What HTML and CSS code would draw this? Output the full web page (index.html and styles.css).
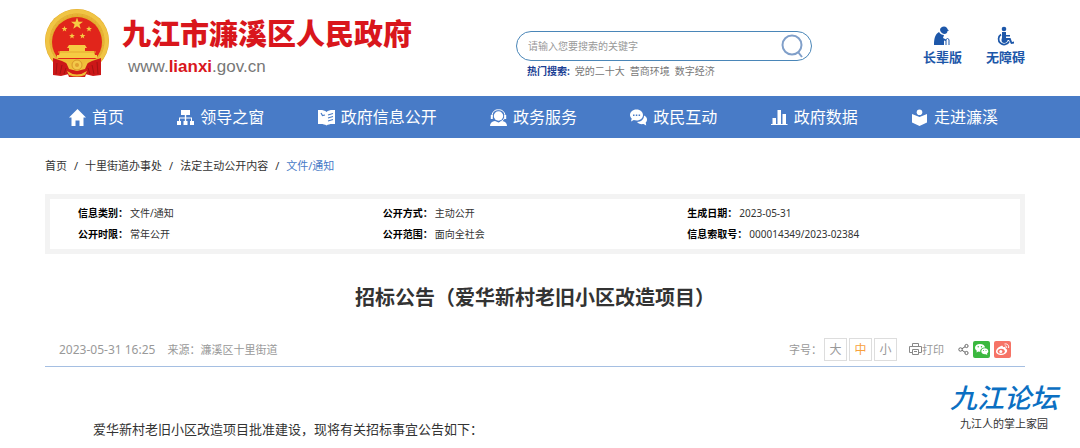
FILE: index.html
```html
<!DOCTYPE html>
<html lang="zh-CN">

<head>
  <meta charset="UTF-8">
  <meta name="viewport" content="width=device-width, initial-scale=1.0">
  <title>招标公告（爱华新村老旧小区改造项目）</title>
  <link rel="stylesheet" href="styles.css">
</head>

<body>
  <header class="header">
    <a class="logo" href="#">
      <svg class="logo__emblem" viewBox="0 0 64 69" aria-hidden="true">
        <circle cx="32" cy="32" r="32" fill="#e3ad2c"/>
        <circle cx="32" cy="32" r="29.500" fill="none" stroke="#f0c444" stroke-width="4"/>
        <circle cx="32" cy="32" r="26.500" fill="none" stroke="#e6b238" stroke-width="2" stroke-dasharray="4 1"/>
        <circle cx="32" cy="33" r="25" fill="#e1251b"/>
        <g fill="#f6cb43">
          <path d="M32 8.500l1.500 4.200 4.500.1-3.600 2.700 1.300 4.300-3.700-2.600-3.700 2.600 1.300-4.300-3.600-2.700 4.500-.1z"/>
          <path d="M19.500 17l.8 2 2.100.1-1.700 1.300.6 2.100-1.800-1.200-1.800 1.200.6-2.100-1.700-1.300 2.100-.1z"/>
          <path d="M44 17l.8 2 2.100.1-1.700 1.300.6 2.100-1.800-1.200-1.800 1.200.6-2.100-1.700-1.300 2.100-.1z"/>
          <path d="M27 24l.8 2 2.100.1-1.700 1.300.6 2.100-1.800-1.200-1.800 1.200.6-2.100-1.700-1.300 2.100-.1z"/>
          <path d="M37.500 24l.8 2 2.100.1-1.700 1.300.6 2.100-1.800-1.200-1.800 1.200.6-2.100-1.700-1.300 2.100-.1z"/>
          <path d="M24 36h16l2 3h-2v3h9l1 4h2v3H12v-3h2l1-4h9v-3h-2z"/>
        </g>
        <path d="M13 43h38" stroke="#e5a92e"/>
        <path d="M9 50h46c-2 7-9 12-23 12S12 57 9 50z" fill="#eebc37"/>
        <path d="M8 49l9 3 10 5-3 8-8 2-8-1z" fill="#cc1718"/>
        <path d="M56 49l-9 3-10 5 3 8 8 2 8-1z" fill="#cc1718"/>
        <path d="M12 54l-1 11m6-9l-2 9m6-6l-2 6m33-12l1 12m-6-9l2 9m-6-6l2 6" stroke="#a31312"/>
        <path d="M21 60h22l-3 8H24z" fill="#d31b18"/>
        <path d="M22 62q10 7 20 0l-2 4q-8 3-16 0z" fill="#efbd38"/>
        <path d="M20 51l6 4h12l6-4-4 9-8 2-8-2z" fill="#f0c03c"/>
        <circle cx="32" cy="56" r="5" fill="#f3c94a" stroke="#d8962a"/>
        <circle cx="32" cy="56" r="2" fill="#e0a030"/>
      </svg>
      <span class="logo__text">
        <strong class="logo__name">九江市濂溪区人民政府</strong>
        <span class="logo__url">www.<b>lianxi</b>.gov.cn</span>
      </span>
    </a>

    <form class="search">
      <div class="search__box">
        <input class="search__input" type="text" placeholder="请输入您要搜索的关键字" aria-label="搜索关键字">
        <button class="search__btn" type="submit" aria-label="搜索">
          <svg width="24" height="24" viewBox="0 0 24 24" fill="none" stroke="#809fc9" stroke-width="2">
            <circle cx="11" cy="11" r="9.500"/>
            <path d="M17 18l4 5"/>
          </svg>
        </button>
      </div>
      <div class="search__hot">
        <b>热门搜索:</b>
        <a href="#">党的二十大</a>
        <a href="#">营商环境</a>
        <a href="#">数字经济</a>
      </div>
    </form>

    <div class="tools">
      <a class="tools__item" href="#">
        <svg width="20" height="20" viewBox="0 0 20 20" fill="#1d57a9">
          <path d="M8 4c0-2 2-3.500 4-3.500S15.500 2 15.700 3.500l1.300 1-1.500.5c0 2-1.500 3-3 3S8.500 6.500 8 4z"/>
          <path d="M7 6c1 2 3 3 5 3l-1 3 3 1.500v1.500l-2-.5V19H2c0-6 1-11 5-13z"/>
          <path d="M14 19v-5.500q1.500-2 3 0V19" fill="none" stroke="#1d57a9" stroke-width="1"/>
        </svg>
        长辈版
      </a>
      <a class="tools__item" href="#">
        <svg width="20" height="20" viewBox="0 0 20 20" fill="#1d57a9">
          <circle cx="9" cy="3" r="2.300"/>
          <path d="M7 6h4v3h4v1.500h-4V12h4.500l1.500 4 2-.5v2l-3 .5-2-4H7z"/>
          <path d="M6 8.500A5.500 5.500 0 1 0 14 15.500" fill="none" stroke="#1d57a9" stroke-width="1.700"/>
          <path d="M7 12h6c0 3-1.500 5-4 5s-3-3-2-5z"/>
        </svg>
        无障碍
      </a>
    </div>
  </header>

  <nav class="nav">
    <a href="#">
      <svg viewBox="0 0 17 17"><path d="M8.500 0l8.500 8.500h-2.500V17h-4v-5.500h-4V17h-4V8.500H0z"/></svg>
      首页
    </a>
    <a href="#">
      <svg viewBox="0 0 17 17"><path d="M4 1h9v5H9.200v2.500H15V12h2v4h-4v-4h1V9.500H9.200V12h1.300v4h-4v-4h1.300V9.500H3V12h1v4H0v-4h2V8.500h5.800V6H4z"/></svg>
      领导之窗
    </a>
    <a href="#">
      <svg viewBox="0 0 17 17"><path d="M0 1h2c3 0 5 .5 6.500 2C10 1.500 12 1 15 1h2v14h-3c-2 0-4 .5-5.500 1.500C7 15.500 5 15 3 15H0z"/><path d="M10 6l5-1.500M10 9l5-1.500M10 12l5-1.500M3 4l1.500 2.500L7 6" fill="none" stroke="#487bc7" stroke-width="1.200"/></svg>
      政府信息公开
    </a>
    <a href="#">
      <svg viewBox="0 0 17 17"><circle cx="8.500" cy="7" r="4.700"/><path d="M2 8V6.500C2.500 2.500 5 .7 8.500.7s6 1.800 6.500 5.800V8M14.500 8.500c-.5 2.500-2 3.500-4 4" fill="none" stroke="#fff"/><path d="M.8 6h2v4h-2zM14.200 6h2v4h-2zM0 17c0-3 2-4.500 5-5l3.500 1.500L12 12c3 .5 5 2 5 5z"/></svg>
      政务服务
    </a>
    <a href="#">
      <svg viewBox="0 0 17 17"><path d="M6.500.5c4 0 6.500 2.500 6.500 5.500s-2.500 5.500-6.500 5.500c-1 0-2-.2-2.700-.5L1 12.500l.7-3C.6 8.500 0 7.300 0 6 0 3 2.500.5 6.500.5z"/><path d="M14 6.500c2 1 3 2.300 3 4 0 1.300-.5 2.300-1.300 3l.5 3-2.700-1.500C10.500 15.500 8 14.500 7 13c4-.2 7-2.500 7-6.500z"/><path d="M3 5.500h1.500v1.500H3zM5.800 5.500h1.500v1.500H5.800zM8.600 5.500h1.500v1.500H8.600z" fill="#487bc7"/></svg>
      政民互动
    </a>
    <a href="#">
      <svg viewBox="0 0 17 17"><path d="M1.500 9H5v6h1.500V1H10v14h1.500V5H15v10h1.500v1H0v-1h1.500z"/></svg>
      政府数据
    </a>
    <a href="#">
      <svg viewBox="0 0 17 17"><circle cx="8.500" cy="3.300" r="2.800"/><path d="M1 5l7.500 3L16 5v8.500L8.500 17 1 13.500z"/></svg>
      走进濂溪
    </a>
  </nav>

  <main class="main">
    <div class="crumb">
      <a href="#">首页</a><span>/</span><a href="#">十里街道办事处</a><span>/</span><a href="#">法定主动公开内容</a><span>/</span><a class="crumb__current" href="#">文件/通知</a>
    </div>

    <dl class="info">
      <div><dt>信息类别：</dt><dd>文件/通知</dd></div>
      <div><dt>公开方式：</dt><dd>主动公开</dd></div>
      <div><dt>生成日期：</dt><dd>2023-05-31</dd></div>
      <div><dt>公开时限：</dt><dd>常年公开</dd></div>
      <div><dt>公开范围：</dt><dd>面向全社会</dd></div>
      <div><dt>信息索取号：</dt><dd>000014349/2023-02384</dd></div>
    </dl>

    <h1 class="title">招标公告（爱华新村老旧小区改造项目）</h1>

    <div class="meta">
      <time class="meta__time">2023-05-31 16:25</time>
      <span>来源：濂溪区十里街道</span>
      <div class="meta__size">
        <span>字号：</span>
        <button type="button">大</button>
        <button type="button" class="active">中</button>
        <button type="button">小</button>
      </div>
      <button class="meta__print" type="button">
        <svg width="13" height="12" viewBox="0 0 13 12" fill="none" stroke="#888">
          <path d="M3.500 3.500v-3h6v3M3 9.500H.5v-6h12v6H10M3.500 6.500h6v5h-6zM5 8.500h3"/>
        </svg>打印
      </button>
      <div class="meta__share">
        <button type="button" aria-label="分享">
          <svg width="11" height="17" viewBox="0 0 11 17" fill="none" stroke="#666">
            <circle cx="2.500" cy="8.500" r="1.700"/><circle cx="8.500" cy="5" r="1.600"/><circle cx="8.500" cy="12" r="1.600"/>
            <path d="M4 7.700l3-1.900M4 9.300l3 1.900"/>
          </svg>
        </button>
        <button type="button" aria-label="微信">
          <svg width="17" height="17" viewBox="0 0 17 17">
            <rect width="17" height="17" rx="2" fill="#3bb83f"/>
            <path d="M7 3c3 0 5 1.700 5 3.500-3 0-5 1.700-4.700 4.200-.8 0-1.500 0-2-.2L3.500 11.500l.3-1.800C2.700 9 2 8 2 6.800 2 4.700 4 3 7 3z" fill="#fff"/>
            <path d="M11.700 7.200c2 0 3.600 1.300 3.600 3 0 1-.5 1.800-1.300 2.300l.3 1.500-1.500-.8c-2.600.3-4.500-1-4.500-3 0-1.700 1.400-3 3.400-3z" fill="#fff"/>
            <g fill="#3bb83f"><circle cx="5.200" cy="5.800" r=".7"/><circle cx="8.500" cy="5.800" r=".7"/><circle cx="10.500" cy="9.400" r=".5"/><circle cx="13" cy="9.400" r=".5"/></g>
          </svg>
        </button>
        <button type="button" aria-label="微博">
          <svg width="17" height="17" viewBox="0 0 17 17">
            <rect width="17" height="17" rx="2" fill="#f67366"/>
            <path d="M7 5c1.500-.6 2.200 0 1.900 1.200 2-.7 3.200-.1 2.700 1.400C15 9 12.500 14 7.500 14 4.500 14 2 12.500 2 10.500 2 8.500 4.500 5.800 7 5z" fill="#fff"/>
            <ellipse cx="7.200" cy="10.300" rx="3.600" ry="2.500" fill="#f67366"/>
            <circle cx="6.800" cy="10.500" r="1.500" fill="#fff"/>
            <path d="M10.500 3c2.800-.6 4.800 1.400 4 4M10.800 5c1.300-.2 2.100.5 1.800 1.800" fill="none" stroke="#fff"/>
          </svg>
        </button>
      </div>
    </div>

    <article class="article">
      <p>爱华新村老旧小区改造项目批准建设，现将有关招标事宜公告如下：</p>
    </article>
  </main>

  <div class="watermark">
    <em>九江论坛</em>
    <span>九江人的掌上家园</span>
  </div>
</body>

</html>
```
FILE: styles.css
```css
* {
  box-sizing: border-box;
}

body {
  margin: 0;
  position: relative;
  background-color: #fff;
  color: #333;
  font-family: "Noto Sans", "Noto Sans CJK SC", sans-serif;
  font-size: 11px;
}

a {
  color: inherit;
  text-decoration: none;
}

button {
  font: inherit;
  color: inherit;
  padding: 0;
  border: none;
  background: none;
  cursor: pointer;
}

svg {
  display: block;
  flex-shrink: 0;
}

/* 头部 */
.header {
  display: flex;
  align-items: flex-start;
  padding: 9px 55px 15px 45px;
}

.logo {
  display: flex;
  gap: 13px;
}

.logo__emblem {
  width: 64px;
  height: 69px;
}

.logo__text {
  display: flex;
  flex-direction: column;
  padding-top: 6px;
}

.logo__name {
  color: #d9161c;
  font-size: 29px;
  font-weight: 900;
  line-height: 38px;
  white-space: nowrap;
}

.logo__url {
  padding-left: 6px;
  color: #777;
  font-family: "Liberation Sans", sans-serif;
  font-size: 17px;
  line-height: 28px;
}

.logo__url b {
  color: #d9161c;
}

.search {
  width: 296px;
  margin: 22px 111px 0 auto;
}

.search__box {
  display: flex;
  align-items: center;
  height: 30px;
  padding: 0 6px 0 11px;
  border: 1px solid #4a86b8;
  border-radius: 15px;
}

.search__input {
  flex-grow: 1;
  min-width: 0;
  padding: 0;
  border: none;
  outline: none;
  background: none;
  font-family: inherit;
  font-size: 10px;
}

.search__input::placeholder {
  color: #999;
}

.search__hot {
  display: flex;
  gap: 5px;
  padding-left: 11px;
  color: #777;
  font-size: 10px;
  line-height: 20px;
}

.search__hot b {
  color: #1b3f94;
}

.tools {
  display: flex;
  gap: 24px;
  padding-top: 17px;
  color: #1d57a9;
  font-size: 13px;
  font-weight: bold;
  line-height: 22px;
}

.tools__item {
  display: flex;
  flex-direction: column;
  align-items: center;
}

/* 导航 */
.nav {
  display: flex;
  justify-content: space-between;
  padding: 0 82px 0 69px;
  background-color: #487bc7;
  color: #fff;
  font-size: 16px;
  line-height: 42px;
}

.nav a {
  display: flex;
  align-items: center;
  gap: 6px;
}

.nav svg {
  width: 17px;
  height: 17px;
  fill: #fff;
}

/* 正文 */
.main {
  padding: 0 55px 0 45px;
}

.crumb {
  padding: 20px 0;
  line-height: 16px;
}

.crumb span {
  margin: 0 7px;
}

.crumb__current {
  color: #487bc7;
}

.info {
  display: grid;
  grid-template-columns: repeat(3, 1fr);
  margin: 0;
  padding: 4px 28px;
  border: 5px solid #f3f3f3;
  font-size: 10px;
  line-height: 21px;
}

.info div {
  display: flex;
  gap: 2px;
}

.info dt {
  color: #000;
  font-weight: bold;
}

.info dd {
  margin: 0;
}

.title {
  margin: 28px 0 18px;
  font-size: 20px;
  line-height: 32px;
  text-align: center;
}

.meta {
  display: flex;
  align-items: center;
  height: 35px;
  padding: 0 14px;
  border-bottom: 1px solid #a5bfe2;
  color: #999;
}

.meta__time {
  margin-right: 12px;
  font-size: 12px;
}

.meta__size {
  display: flex;
  align-items: center;
  gap: 2px;
  margin-left: auto;
}

.meta__size button {
  width: 23px;
  height: 23px;
  border: 1px solid #ddd;
  font-size: 12px;
}

.meta__size .active {
  color: #f7a13d;
}

.meta__print {
  display: flex;
  align-items: center;
  margin: 0 14px 0 12px;
}

.meta__share {
  display: flex;
  gap: 4px;
}

.article {
  padding: 49px 22px 0;
  font-size: 13px;
  line-height: 26px;
}

.article p {
  margin: 0;
  text-indent: 2em;
}

/* 右下角水印 */
.watermark {
  position: absolute;
  right: 22px;
  bottom: 10px;
  display: flex;
  flex-direction: column;
  align-items: center;
  font-size: 11px;
  line-height: 16px;
}

.watermark em {
  color: #0b6fc2;
  font-size: 27px;
  font-weight: 500;
  line-height: 36px;
}
```
